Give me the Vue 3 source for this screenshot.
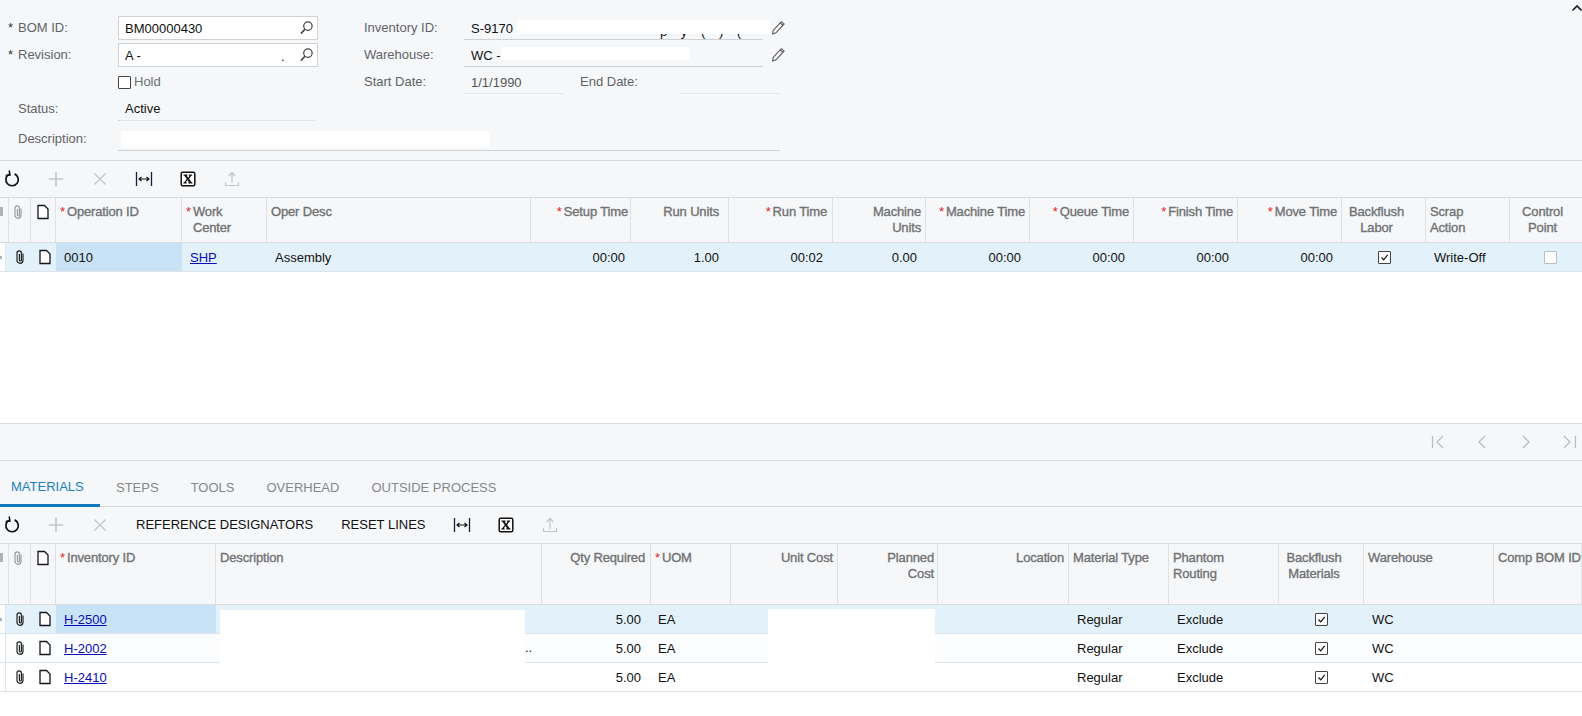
<script setup>
const opCols = [
  { w: 6, kind: 'edge' },
  { w: 25, kind: 'clip' },
  { w: 25, kind: 'doc' },
  { w: 126, lines: ['Operation ID'], req: true, align: 'left' },
  { w: 85, lines: ['Work', 'Center'], req: true, align: 'left' },
  { w: 264, lines: ['Oper Desc'], align: 'left' },
  { w: 100, lines: ['Setup Time'], req: true, align: 'right', hp: 2, vp: 6 },
  { w: 98, lines: ['Run Units'], align: 'right', hp: 9, vp: 10 },
  { w: 104, lines: ['Run Time'], req: true, align: 'right', hp: 5, vp: 10 },
  { w: 93, lines: ['Machine', 'Units'], align: 'right', vp: 9 },
  { w: 104, lines: ['Machine Time'], req: true, align: 'right', vp: 9 },
  { w: 104, lines: ['Queue Time'], req: true, align: 'right', vp: 9 },
  { w: 104, lines: ['Finish Time'], req: true, align: 'right', vp: 9 },
  { w: 104, lines: ['Move Time'], req: true, align: 'right', vp: 9 },
  { w: 84, lines: ['Backflush', 'Labor'], align: 'center' },
  { w: 84, lines: ['Scrap', 'Action'], align: 'left' },
  { w: 80, lines: ['Control', 'Point'], align: 'center' }
]
const opRows = [
  { cells: ['0010', { link: 'SHP' }, 'Assembly', '00:00', '1.00', '00:02', '0.00', '00:00', '00:00', '00:00', '00:00', { check: true }, 'Write-Off', { check: false }] }
]
const matCols = [
  { w: 6, kind: 'edge' },
  { w: 25, kind: 'clip' },
  { w: 25, kind: 'doc' },
  { w: 160, lines: ['Inventory ID'], req: true, align: 'left' },
  { w: 326, lines: ['Description'], align: 'left' },
  { w: 109, lines: ['Qty Required'], align: 'right', hp: 5, vp: 10 },
  { w: 80, lines: ['UOM'], req: true, align: 'left', vl: 7 },
  { w: 107, lines: ['Unit Cost'], align: 'right' },
  { w: 100, lines: ['Planned', 'Cost'], align: 'right', hp: 3 },
  { w: 131, lines: ['Location'], align: 'right' },
  { w: 100, lines: ['Material Type'], align: 'left' },
  { w: 110, lines: ['Phantom', 'Routing'], align: 'left' },
  { w: 85, lines: ['Backflush', 'Materials'], align: 'center' },
  { w: 130, lines: ['Warehouse'], align: 'left' },
  { w: 88, lines: ['Comp BOM ID'], align: 'left' }
]
const matRow = (id) => ({
  cells: [{ link: id }, '', '5.00', 'EA', '', '', '', 'Regular', 'Exclude', { check: true }, 'WC', '']
})
const matRows = [matRow('H-2500'), matRow('H-2002'), matRow('H-2410')]

const template = (cols) => cols.map((c) => c.w + 'px').join(' ')
const dataCols = (cols) => cols.slice(3)
const isObj = (v) => v && typeof v === 'object'
const headPad = (c) => (c.hp != null ? { paddingRight: c.hp + 'px' } : null)
const valPad = (c) => {
  const s = {}
  if (c.vp != null) s.paddingRight = c.vp + 'px'
  if (c.vl != null) s.paddingLeft = c.vl + 'px'
  return s
}
</script>

<template>
  <div class="page">
    <svg class="defs" aria-hidden="true">
      <symbol id="i-clip" viewBox="0 0 16 16">
        <path d="M11 4.500v6.800a3 3 0 0 1-6 0V4a2.200 2.200 0 0 1 4.400 0v7a1 1 0 0 1-2 0V5" fill="none" stroke="currentColor" stroke-width="1.200" />
      </symbol>
      <symbol id="i-doc" viewBox="0 0 16 16">
        <path d="M3 1.500h6.500L13 5v9.500H3z" fill="#fff" stroke="currentColor" stroke-width="1.300" />
      </symbol>
      <symbol id="i-refresh" viewBox="0 0 20 20">
        <path d="M7 5.200a6.200 6.200 0 1 0 5.600-.3" fill="none" stroke="currentColor" stroke-width="1.700" />
        <path d="M7.200 1.500l.8 4.600-4.300.3" fill="none" stroke="currentColor" stroke-width="1.500" />
      </symbol>
      <symbol id="i-plus" viewBox="0 0 20 20">
        <path d="M10 3v14M3 10h14" stroke="currentColor" stroke-width="1.600" />
      </symbol>
      <symbol id="i-x" viewBox="0 0 20 20">
        <path d="M4.500 4.500l11 11M15.500 4.500l-11 11" stroke="currentColor" stroke-width="1.300" />
      </symbol>
      <symbol id="i-fit" viewBox="0 0 20 20">
        <path d="M2.500 3v14M17.500 3v14" stroke="#1b1b3a" stroke-width="1.300" />
        <path d="M5 10h10M7.500 8l-2.500 2 2.500 2M12.500 8l2.500 2-2.500 2" fill="none" stroke="#111" stroke-width="1.100" />
      </symbol>
      <symbol id="i-excel" viewBox="0 0 20 20">
        <rect x="3.200" y="3.200" width="13.600" height="13.600" rx="1.500" fill="#fff" stroke="#111" stroke-width="1.500" />
        <path d="M5.500 5.500h4v1l-.7.200 1.400 2 1.300-2-.7-.2v-1h3.400v1l-.9.200-2.200 3 2.500 3.600.9.200v1h-4.200v-1l.7-.2-1.500-2.300-1.600 2.300.8.200v1H5.300v-1l.9-.2 2.600-3.400-2.400-3.200-.9-.2z" fill="#111" />
      </symbol>
      <symbol id="i-up" viewBox="0 0 20 20">
        <path d="M10 14V4M6.800 7L10 3.500 13.200 7M3.500 13v3.500h13V13" fill="none" stroke="currentColor" stroke-width="1.200" />
      </symbol>
      <symbol id="i-search" viewBox="0 0 16 16">
        <circle cx="9.500" cy="6.500" r="4.500" fill="none" stroke="currentColor" stroke-width="1.300" />
        <path d="M6.300 9.800L2 14.500" stroke="currentColor" stroke-width="1.700" />
      </symbol>
      <symbol id="i-pencil" viewBox="0 0 16 16">
        <path d="M11 1.800l3 2.400-8.700 9.400-3.600 1.200.6-3.600zM9.800 3.200l3 2.500" fill="none" stroke="currentColor" stroke-width="1.100" />
      </symbol>
    </svg>

    <svg class="collapse" width="12" height="8" viewBox="0 0 12 8" aria-hidden="true">
      <path d="M1.500 6.500L6 2l4.500 4.500" fill="none" stroke="#1a1f2e" stroke-width="1.700" />
    </svg>

    <section class="form">
      <div class="form-top">
        <div class="form-col left">
          <div class="frow">
            <label class="flabel"><i class="rq">*</i>BOM ID:</label>
            <div class="input">
              <span>BM00000430</span>
              <svg class="search" width="15" height="15"><use href="#i-search" /></svg>
            </div>
          </div>
          <div class="frow">
            <label class="flabel"><i class="rq">*</i>Revision:</label>
            <div class="input">
              <span>A -</span>
              <em class="speck">.</em>
              <svg class="search" width="15" height="15"><use href="#i-search" /></svg>
            </div>
          </div>
          <div class="frow">
            <span class="flabel"></span>
            <div class="hold"><span class="box"></span><span>Hold</span></div>
          </div>
          <div class="frow">
            <label class="flabel plain">Status:</label>
            <div class="ro dotted status">Active</div>
          </div>
        </div>
        <div class="form-col right">
          <div class="frow">
            <label class="rlabel">Inventory ID:</label>
            <div class="ro line wide">
              <span class="nw">S-9170</span>
              <span class="frag">p y ( ) (</span>
              <span class="band inv"></span>
            </div>
            <svg class="pencil" width="15" height="15"><use href="#i-pencil" /></svg>
          </div>
          <div class="frow">
            <label class="rlabel">Warehouse:</label>
            <div class="ro line wide">
              <span class="nw">WC -</span><span class="band wh"></span>
            </div>
            <svg class="pencil" width="15" height="15"><use href="#i-pencil" /></svg>
          </div>
          <div class="frow">
            <label class="rlabel">Start Date:</label>
            <div class="ro dotted date muted">1/1/1990</div>
            <label class="elabel">End Date:</label>
            <div class="ro dotted date"></div>
          </div>
        </div>
      </div>
      <div class="frow desc">
        <label class="flabel plain">Description:</label>
        <div class="ro line descval"><span class="band dsc"></span></div>
      </div>
    </section>

    <div class="toolbar">
      <svg class="ti dark" width="20" height="20"><use href="#i-refresh" /></svg>
      <svg class="ti off" width="20" height="20"><use href="#i-plus" /></svg>
      <svg class="ti off" width="20" height="20"><use href="#i-x" /></svg>
      <svg class="ti" width="20" height="20"><use href="#i-fit" /></svg>
      <svg class="ti" width="20" height="20"><use href="#i-excel" /></svg>
      <svg class="ti off" width="20" height="20"><use href="#i-up" /></svg>
    </div>

    <div class="grid ops">
      <div class="ghead h-ops" :style="{ gridTemplateColumns: template(opCols) }">
        <div v-for="(c, i) in opCols" :key="i" class="hc" :class="c.align" :style="headPad(c)">
          <span v-if="c.kind === 'edge'" class="edge-ic"></span>
          <svg v-else-if="c.kind === 'clip'" class="hclip" width="16" height="16"><use href="#i-clip" /></svg>
          <svg v-else-if="c.kind === 'doc'" class="hdoc" width="16" height="16"><use href="#i-doc" /></svg>
          <template v-else>
            <i v-if="c.req" class="star">*</i>
            <span class="ht"><span v-for="l in c.lines" :key="l" class="hl">{{ l }}</span></span>
          </template>
        </div>
      </div>
      <div v-for="(r, ri) in opRows" :key="ri" class="grow sel" :style="{ gridTemplateColumns: template(opCols) }">
        <div class="dc edge"><span class="tick"></span></div>
        <div class="dc ic"><svg class="rclip" width="16" height="16"><use href="#i-clip" /></svg></div>
        <div class="dc ic"><svg class="rdoc" width="16" height="16"><use href="#i-doc" /></svg></div>
        <div v-for="(v, ci) in r.cells" :key="ci" class="dc" :class="[dataCols(opCols)[ci].align, { active: ci === 0 }]" :style="valPad(dataCols(opCols)[ci])">
          <a v-if="isObj(v) && v.link" class="link">{{ v.link }}</a>
          <span v-else-if="isObj(v)" class="box" :class="{ on: v.check, soft: !v.check }">
            <svg v-if="v.check" width="11" height="11" viewBox="0 0 11 11"><path d="M2.500 5.500l2.200 2.300 4-5" fill="none" stroke="#111" stroke-width="1.200" /></svg>
          </span>
          <span v-else>{{ v }}</span>
        </div>
      </div>
      <div class="gempty"></div>
    </div>

    <div class="pager">
      <svg width="20" height="20" viewBox="0 0 20 20"><path d="M4.500 4v12M15 4l-6 6 6 6" /></svg>
      <svg width="20" height="20" viewBox="0 0 20 20"><path d="M13 4l-6 6 6 6" /></svg>
      <svg width="20" height="20" viewBox="0 0 20 20"><path d="M7 4l6 6-6 6" /></svg>
      <svg width="20" height="20" viewBox="0 0 20 20"><path d="M4 4l6 6-6 6M15.500 4v12" /></svg>
    </div>

    <nav class="tabs">
      <span class="tab on">MATERIALS</span>
      <span class="tab">STEPS</span>
      <span class="tab">TOOLS</span>
      <span class="tab">OVERHEAD</span>
      <span class="tab">OUTSIDE PROCESS</span>
    </nav>

    <div class="toolbar">
      <svg class="ti dark" width="20" height="20"><use href="#i-refresh" /></svg>
      <svg class="ti off" width="20" height="20"><use href="#i-plus" /></svg>
      <svg class="ti off" width="20" height="20"><use href="#i-x" /></svg>
      <span class="tbtn">REFERENCE DESIGNATORS</span>
      <span class="tbtn">RESET LINES</span>
      <svg class="ti" width="20" height="20"><use href="#i-fit" /></svg>
      <svg class="ti" width="20" height="20"><use href="#i-excel" /></svg>
      <svg class="ti off" width="20" height="20"><use href="#i-up" /></svg>
    </div>

    <div class="grid mats">
      <div class="ghead h-mats" :style="{ gridTemplateColumns: template(matCols) }">
        <div v-for="(c, i) in matCols" :key="i" class="hc" :class="c.align" :style="headPad(c)">
          <span v-if="c.kind === 'edge'" class="edge-ic"></span>
          <svg v-else-if="c.kind === 'clip'" class="hclip" width="16" height="16"><use href="#i-clip" /></svg>
          <svg v-else-if="c.kind === 'doc'" class="hdoc" width="16" height="16"><use href="#i-doc" /></svg>
          <template v-else>
            <i v-if="c.req" class="star">*</i>
            <span class="ht"><span v-for="l in c.lines" :key="l" class="hl">{{ l }}</span></span>
          </template>
        </div>
      </div>
      <div class="mbody">
        <div v-for="(r, ri) in matRows" :key="ri" class="grow" :class="{ sel: ri === 0, alt: ri === 1 }" :style="{ gridTemplateColumns: template(matCols) }">
          <div class="dc edge"><span v-if="ri === 0" class="tick"></span></div>
          <div class="dc ic"><svg class="rclip" width="16" height="16"><use href="#i-clip" /></svg></div>
          <div class="dc ic"><svg class="rdoc" width="16" height="16"><use href="#i-doc" /></svg></div>
          <div v-for="(v, ci) in r.cells" :key="ci" class="dc" :class="[dataCols(matCols)[ci].align, { active: ci === 0 && ri === 0 }]" :style="valPad(dataCols(matCols)[ci])">
            <a v-if="isObj(v) && v.link" class="link">{{ v.link }}</a>
            <span v-else-if="isObj(v)" class="box on">
              <svg width="11" height="11" viewBox="0 0 11 11"><path d="M2.500 5.500l2.200 2.300 4-5" fill="none" stroke="#111" stroke-width="1.200" /></svg>
            </span>
            <span v-else>{{ v }}</span>
          </div>
        </div>
        <div class="mask m1"></div>
        <div class="mask m2"></div>
        <span class="dots">..</span>
      </div>
    </div>
  </div>
</template>

<style scoped>
.page {
  position: relative;
  width: 1582px;
  height: 716px;
  overflow: hidden;
  background: #fff;
  font: 13px/16px "Liberation Sans", Arial, sans-serif;
  color: #111;
}
.defs { position: absolute; width: 0; height: 0; }
.collapse { position: absolute; left: 1571px; top: 4px; }

.form {
  box-sizing: border-box;
  height: 161px;
  padding-top: 16px;
  background: #f6f7f9;
  border-bottom: 1px solid #d5d8db;
}
.form-top { display: flex; }
.form-col.left { width: 364px; }
.frow { display: flex; height: 27px; line-height: 24px; }
.flabel { width: 118px; flex: none; padding-left: 8px; box-sizing: border-box; color: #5f6368; }
.flabel.plain { padding-left: 18px; }
.rq { display: inline-block; width: 10px; font-style: normal; color: #333; }
.input {
  position: relative;
  box-sizing: border-box;
  width: 200px;
  height: 24px;
  padding: 0 6px;
  line-height: 24px;
  background: #fff;
  border: 1px solid #cfd3d7;
}
.search { position: absolute; right: 3px; top: 3px; color: #444; }
.speck { position: absolute; left: 162px; top: 1px; font-style: normal; }
.hold { display: flex; align-items: center; gap: 3px; height: 24px; color: #6b6f73; }
.box {
  display: inline-flex;
  align-items: center;
  justify-content: center;
  box-sizing: border-box;
  width: 13px;
  height: 13px;
  background: #fff;
  border: 1px solid #444;
  border-radius: 1px;
}
.box.soft { border-color: #b9bdc1; }
.dc .box { margin-top: -2px; }
.ro { box-sizing: border-box; height: 24px; line-height: 25px; }
.line { border-bottom: 1px solid #ced2d6; }
.dotted { border-bottom: 1px dotted #d4d7da; }
.status { width: 198px; padding-left: 7px; line-height: 24px; }
.rlabel { width: 100px; flex: none; color: #5f6368; }
.wide { position: relative; display: flex; width: 299px; padding-left: 7px; }
.nw { flex: none; white-space: nowrap; }
.band { display: block; background: #fff; }
.frag { position: absolute; left: 196px; top: 3px; letter-spacing: 5px; white-space: nowrap; }
.band.inv { width: 253px; height: 14px; margin: 4px 0 0 4px; position: relative; flex: none; }
.band.wh { width: 189px; height: 13px; margin: 4px 0 0 0; flex: none; }
.pencil { margin: 4px 0 0 8px; color: #555; }
.date { width: 99px; padding-left: 7px; }
.muted { color: #555; }
.elabel { width: 118px; padding-left: 17px; box-sizing: border-box; color: #5f6368; }
.desc { height: 24px; margin-top: 3px; }
.descval { width: 662px; padding-left: 3px; }
.band.dsc { width: 369px; height: 17px; margin-top: 4px; }

.toolbar {
  box-sizing: border-box;
  display: flex;
  align-items: center;
  gap: 24px;
  height: 36px;
  padding-left: 2px;
  background: #f6f7f9;
}
.ti { flex: none; }
.ti.dark { color: #111; }
.ti.off { color: #c3c6c9; }
.tbtn { color: #111; white-space: nowrap; margin: -1px 3px 0 2px; }
.tbtn + .tbtn { margin-right: 2px; margin-left: 1px; }

.grid { overflow: hidden; }
.ghead {
  display: grid;
  box-sizing: border-box;
  background: #f6f7f9;
  border-top: 1px solid #d9dcdf;
  border-bottom: 1px solid #d9dcdf;
}
.h-ops { height: 46px; }
.h-mats { height: 62px; }
.hc {
  box-sizing: border-box;
  display: flex;
  padding: 6px 4px 0;
  border-right: 1px solid #dfe2e5;
  color: #707274;
  -webkit-text-stroke: 0.35px #707274;
  letter-spacing: -0.15px;
  overflow: hidden;
  white-space: nowrap;
}
.hc.right { justify-content: flex-end; }
.hc.center { justify-content: center; padding-right: 18px; }
.hc.center .ht { text-align: center; }
.hc.right .ht { text-align: right; }
.ht { display: block; }
.hl { display: block; }
.star { font-style: normal; color: #d9252a; margin-right: 2px; -webkit-text-stroke: 0; }
.edge-ic { display: block; width: 3px; height: 9px; margin: 3px 0 0 -4px; background: #aeb2b6; }
.hclip { color: #9a9da1; flex: none; }
.hdoc { color: #15151f; flex: none; }

.grow { display: grid; box-sizing: border-box; height: 29px; border-bottom: 1px solid #dde3e8; background: #fff; }
.grow.sel { background: #e3f1fa; }
.grow.alt { background: #fbfdfe; }
.dc {
  box-sizing: border-box;
  display: flex;
  align-items: center;
  padding: 2px 8px 0;
  white-space: nowrap;
  overflow: hidden;
}
.dc.right { justify-content: flex-end; }
.dc.center { justify-content: center; }
.dc.edge { padding: 0; background: #fff; border-right: 1px solid #e3e6e9; }
.dc.ic { padding: 0; justify-content: center; }
.dc.active { background: #c9e2f5; }
.tick { display: block; width: 2px; height: 3px; background: #9fb4c4; }
.rclip { color: #222; margin-left: 3px; }
.rdoc { color: #15151f; margin-left: 3px; }
.link { color: #0b0bb8; text-decoration: underline; }
.ops .gempty { height: 151px; background: #fff; }

.pager {
  box-sizing: border-box;
  display: flex;
  align-items: center;
  justify-content: flex-end;
  gap: 24px;
  height: 38px;
  padding-right: 2px;
  background: #f6f7f9;
  border-top: 1px solid #d9dcdf;
  border-bottom: 1px solid #d9dcdf;
}
.pager svg { width: 20px; height: 20px; fill: none; stroke: #b8bcc0; stroke-width: 1.3; }

.tabs {
  box-sizing: border-box;
  display: flex;
  height: 46px;
  padding-top: 18px;
  background: #f6f7f9;
  border-bottom: 1px solid #d9dcdf;
}
.tab { box-sizing: border-box; height: 28px; padding: 0 16px; line-height: 18px; color: #84888c; }
.tab.on {
  width: 100px;
  padding-left: 11px;
  line-height: 16px;
  color: #1a7fc1;
  border-bottom: 3px solid #0f77bd;
}

.mbody { position: relative; }
.mask { position: absolute; background: #fff; }
.m1 { left: 220px; top: 5px; width: 305px; height: 53px; }
.m2 { left: 768px; top: 4px; width: 167px; height: 54px; }
.dots { position: absolute; left: 525px; top: 35px; }
</style>

<style>
html, body { margin: 0; background: #fff; }
</style>
